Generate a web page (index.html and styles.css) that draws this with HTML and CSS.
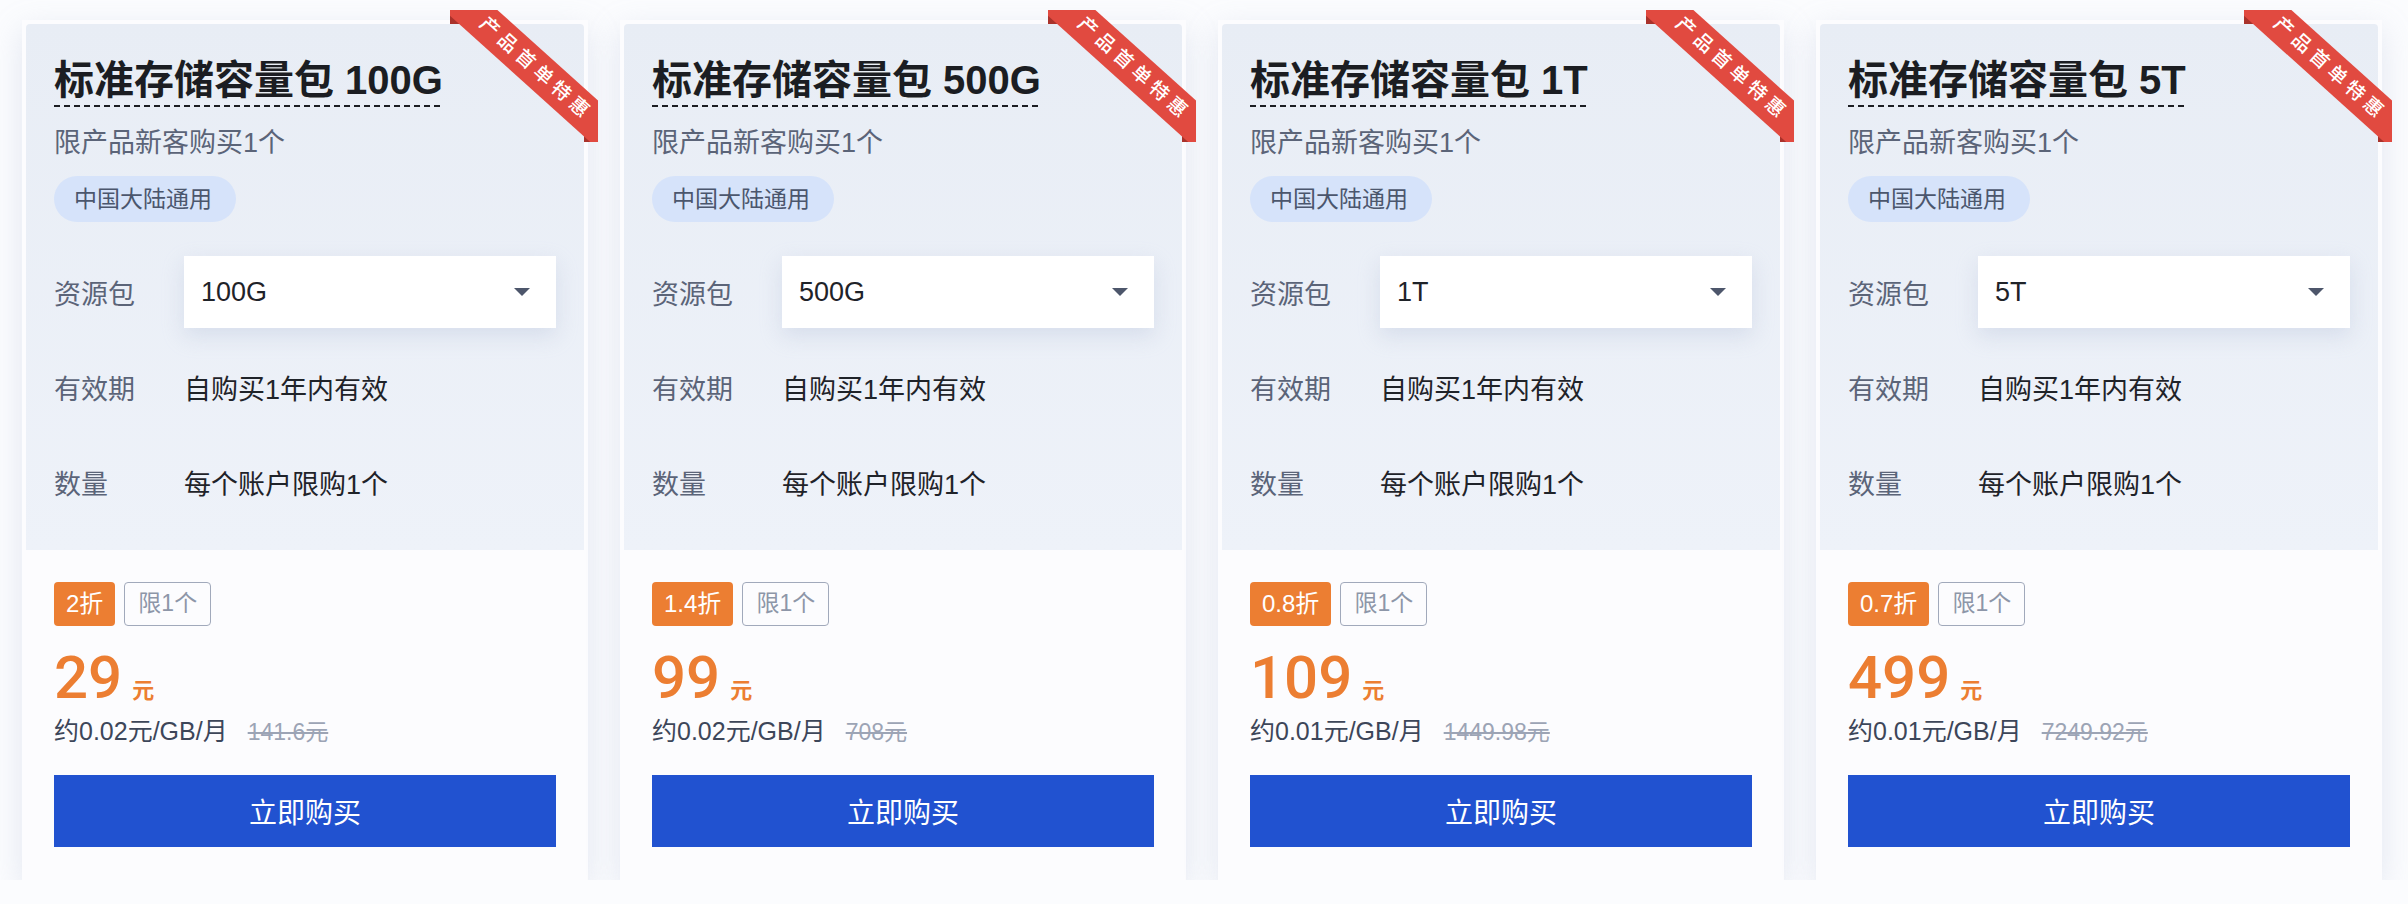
FILE: index.html
```html
<!DOCTYPE html>
<html lang="zh-CN">
<head>
<meta charset="utf-8">
<title>标准存储容量包</title>
<link rel="stylesheet" href="styles.css">
</head>
<body>
<div class="page">

  <div class="card">
    <div class="panel">
      <div class="ribbon"><span class="ribbon-band"></span><span class="ribbon-text">产品首单特惠</span></div>
      <div class="title-wrap"><span class="title">标准存储容量包 100G</span></div>
      <div class="subtitle">限产品新客购买1个</div>
      <div class="tag-wrap"><span class="region">中国大陆通用</span></div>
      <div class="rows">
        <div class="row"><span class="label">资源包</span><div class="select"><span>100G</span><span class="arrow"></span></div></div>
        <div class="row"><span class="label">有效期</span><span class="value">自购买1年内有效</span></div>
        <div class="row"><span class="label">数量</span><span class="value">每个账户限购1个</span></div>
      </div>
    </div>
    <div class="bottom">
      <div class="badges"><span class="discount">2折</span><span class="limit">限1个</span></div>
      <div class="price"><span class="num">29</span><span class="unit">元</span></div>
      <div class="sub">约0.02元/GB/月<s>141.6元</s></div>
      <button class="buy">立即购买</button>
    </div>
  </div>

  <div class="card">
    <div class="panel">
      <div class="ribbon"><span class="ribbon-band"></span><span class="ribbon-text">产品首单特惠</span></div>
      <div class="title-wrap"><span class="title">标准存储容量包 500G</span></div>
      <div class="subtitle">限产品新客购买1个</div>
      <div class="tag-wrap"><span class="region">中国大陆通用</span></div>
      <div class="rows">
        <div class="row"><span class="label">资源包</span><div class="select"><span>500G</span><span class="arrow"></span></div></div>
        <div class="row"><span class="label">有效期</span><span class="value">自购买1年内有效</span></div>
        <div class="row"><span class="label">数量</span><span class="value">每个账户限购1个</span></div>
      </div>
    </div>
    <div class="bottom">
      <div class="badges"><span class="discount">1.4折</span><span class="limit">限1个</span></div>
      <div class="price"><span class="num">99</span><span class="unit">元</span></div>
      <div class="sub">约0.02元/GB/月<s>708元</s></div>
      <button class="buy">立即购买</button>
    </div>
  </div>

  <div class="card">
    <div class="panel">
      <div class="ribbon"><span class="ribbon-band"></span><span class="ribbon-text">产品首单特惠</span></div>
      <div class="title-wrap"><span class="title">标准存储容量包 1T</span></div>
      <div class="subtitle">限产品新客购买1个</div>
      <div class="tag-wrap"><span class="region">中国大陆通用</span></div>
      <div class="rows">
        <div class="row"><span class="label">资源包</span><div class="select"><span>1T</span><span class="arrow"></span></div></div>
        <div class="row"><span class="label">有效期</span><span class="value">自购买1年内有效</span></div>
        <div class="row"><span class="label">数量</span><span class="value">每个账户限购1个</span></div>
      </div>
    </div>
    <div class="bottom">
      <div class="badges"><span class="discount">0.8折</span><span class="limit">限1个</span></div>
      <div class="price"><span class="num">109</span><span class="unit">元</span></div>
      <div class="sub">约0.01元/GB/月<s>1449.98元</s></div>
      <button class="buy">立即购买</button>
    </div>
  </div>

  <div class="card">
    <div class="panel">
      <div class="ribbon"><span class="ribbon-band"></span><span class="ribbon-text">产品首单特惠</span></div>
      <div class="title-wrap"><span class="title">标准存储容量包 5T</span></div>
      <div class="subtitle">限产品新客购买1个</div>
      <div class="tag-wrap"><span class="region">中国大陆通用</span></div>
      <div class="rows">
        <div class="row"><span class="label">资源包</span><div class="select"><span>5T</span><span class="arrow"></span></div></div>
        <div class="row"><span class="label">有效期</span><span class="value">自购买1年内有效</span></div>
        <div class="row"><span class="label">数量</span><span class="value">每个账户限购1个</span></div>
      </div>
    </div>
    <div class="bottom">
      <div class="badges"><span class="discount">0.7折</span><span class="limit">限1个</span></div>
      <div class="price"><span class="num">499</span><span class="unit">元</span></div>
      <div class="sub">约0.01元/GB/月<s>7249.92元</s></div>
      <button class="buy">立即购买</button>
    </div>
  </div>

</div>
</body>
</html>
```

FILE: styles.css
```css
html, body {
  margin: 0;
  padding: 0;
}
body {
  background: #fbfcfe;
  font-family: "Liberation Sans", "Noto Sans CJK SC", sans-serif;
  color: #1f2329;
}
.page {
  display: flex;
  gap: 32px;
  padding: 20px 0 0 22px;
}
.card {
  width: 566px;
  height: 860px;
  box-sizing: border-box;
  padding: 4px 4px 0;
  background: #fcfcfe;
  box-shadow: 0 10px 30px rgba(165, 176, 204, 0.28);
  display: flex;
  flex-direction: column;
}
.panel {
  position: relative;
  padding: 32px 28px 32px;
  background: linear-gradient(180deg, #e8edf5 0%, #eef2f9 100%);
  border-radius: 4px 4px 0 0;
}

/* ribbon */
.ribbon {
  position: absolute;
  top: -14px;
  right: -14px;
  width: 148px;
  height: 132px;
  overflow: hidden;
  z-index: 2;
}
.ribbon::before,
.ribbon::after {
  content: "";
  position: absolute;
  width: 14px;
  height: 14px;
  background: #a9322b;
  clip-path: polygon(0 0, 100% 100%, 0 100%);
  z-index: 0;
}
.ribbon::before { left: 0; top: 0; }
.ribbon::after { left: 134px; top: 118px; }
.ribbon-band {
  position: absolute;
  left: 86px;
  top: 59px;
  width: 260px;
  height: 36px;
  margin: -18px 0 0 -130px;
  transform: rotate(42deg);
  background: #e14a40;
  z-index: 1;
}
.ribbon-text {
  position: absolute;
  left: 86px;
  top: 59px;
  transform: translate(-50%, -50%) rotate(42deg);
  color: #fff;
  font-size: 19px;
  font-weight: 500;
  line-height: 20px;
  letter-spacing: 5px;
  white-space: nowrap;
  z-index: 3;
}

/* title */
.title {
  display: inline-block;
  font-size: 40px;
  font-weight: 600;
  line-height: 48px;
  padding-bottom: 3px;
  color: #1b1d22;
  background-image: linear-gradient(90deg, #1b1d22 60%, transparent 60%);
  background-repeat: repeat-x;
  background-position: left bottom;
  background-size: 10px 2px;
}
.subtitle {
  margin-top: 18px;
  font-size: 27px;
  line-height: 36px;
  color: #5b6478;
}
.tag-wrap {
  margin-top: 15px;
  display: flex;
}
.region {
  height: 46px;
  line-height: 46px;
  padding: 0 24px 0 20px;
  border-radius: 23px;
  background: #d6e3fa;
  color: #4b566d;
  font-size: 23px;
}
.rows {
  margin-top: 34px;
  display: flex;
  flex-direction: column;
  gap: 23px;
}
.row {
  display: flex;
  align-items: center;
  height: 72px;
}
.label {
  width: 130px;
  flex: none;
  font-size: 27px;
  color: #5b6478;
}
.value {
  font-size: 27px;
  color: #1f2329;
}
.select {
  flex: 1;
  height: 72px;
  box-sizing: border-box;
  padding: 0 26px 0 17px;
  background: #fff;
  box-shadow: 0 8px 20px rgba(170, 182, 212, 0.32);
  display: flex;
  align-items: center;
  justify-content: space-between;
  font-size: 27px;
  color: #1f2329;
}
.arrow {
  width: 0;
  height: 0;
  border-left: 8px solid transparent;
  border-right: 8px solid transparent;
  border-top: 8px solid #4d566b;
}

/* bottom */
.bottom {
  padding: 32px 28px 32px;
  display: flex;
  flex-direction: column;
}
.badges {
  display: flex;
  gap: 9px;
}
.discount {
  height: 44px;
  line-height: 44px;
  padding: 0 12px;
  border-radius: 4px;
  background: #ec7e32;
  color: #fff;
  font-size: 24px;
}
.limit {
  height: 44px;
  line-height: 41px;
  box-sizing: border-box;
  padding: 0 13px;
  border: 1.5px solid #a1a9bb;
  border-radius: 4px;
  color: #8d96a8;
  font-size: 23px;
}
.price {
  margin-top: 22px;
  height: 60px;
  display: flex;
  align-items: baseline;
  color: #ec7e32;
}
.num {
  font-family: Roboto, "Liberation Sans", sans-serif;
  font-weight: 500;
  font-size: 60px;
  line-height: 60px;
}
.unit {
  margin-left: 10px;
  font-size: 22px;
  font-weight: 700;
}
.sub {
  margin-top: 7px;
  font-size: 25px;
  line-height: 32px;
  color: #3d4659;
}
.sub s {
  margin-left: 20px;
  font-size: 23px;
  color: #9ca4b5;
}
.buy {
  margin-top: 27px;
  height: 72px;
  border: 0;
  padding: 0;
  background: #2152d0;
  color: #fff;
  font-family: inherit;
  font-size: 28px;
  cursor: pointer;
}
```
